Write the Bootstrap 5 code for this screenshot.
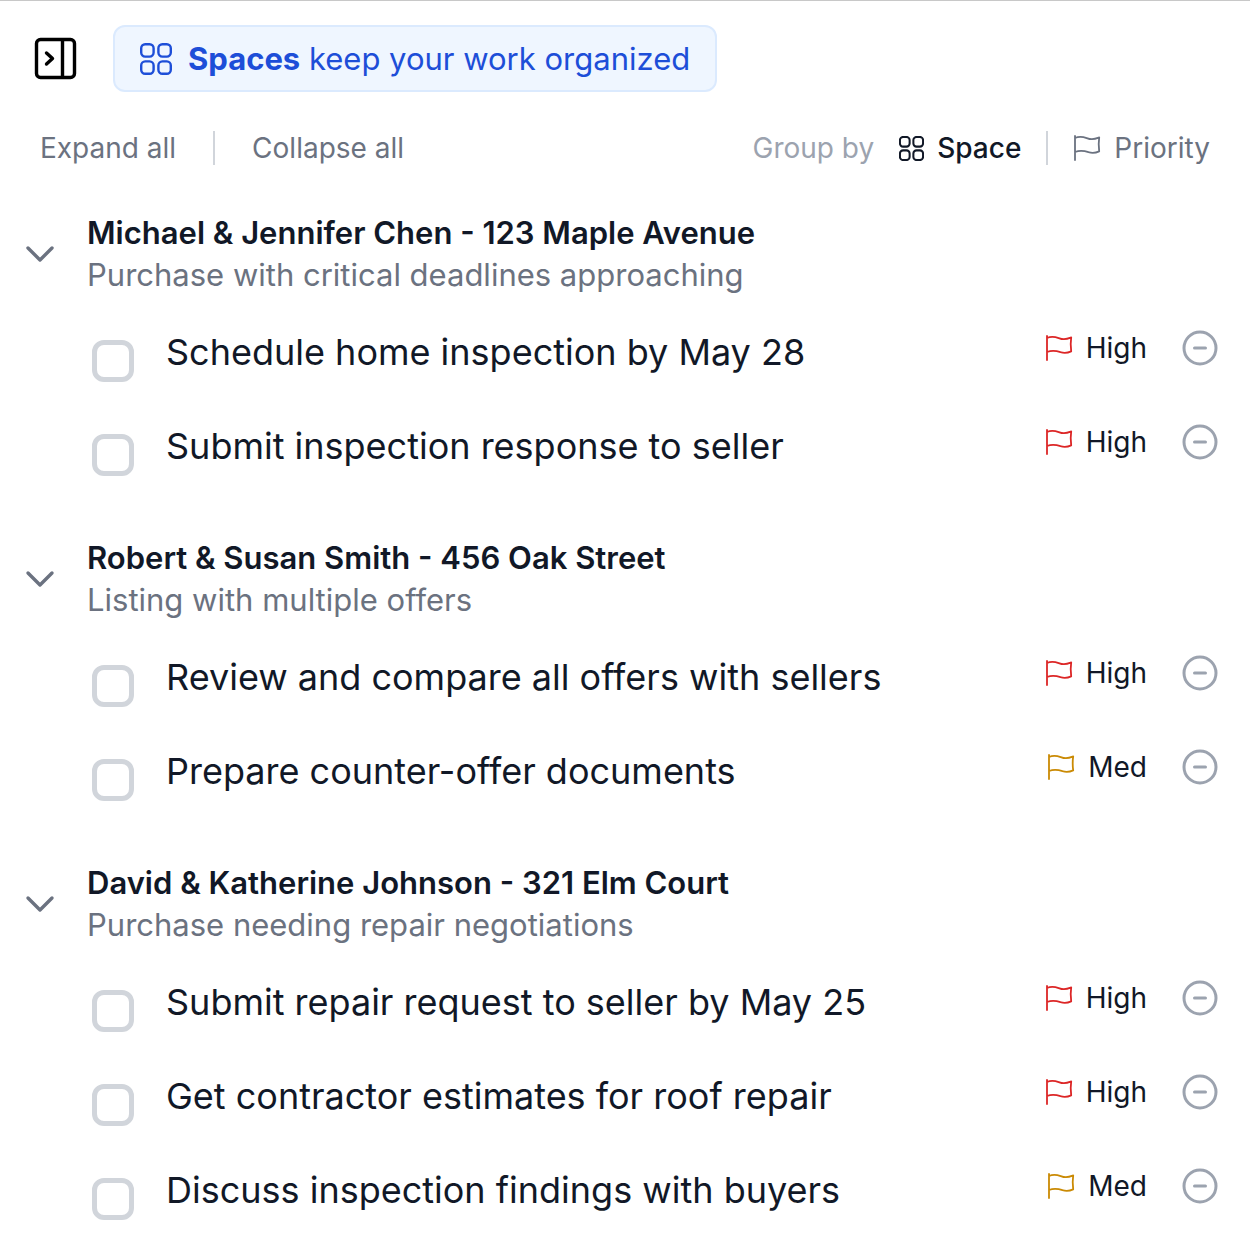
<!DOCTYPE html>
<html lang="en">
<head>
<meta charset="utf-8">
<meta name="viewport" content="width=device-width, initial-scale=1">
<title>Spaces</title>
<link rel="stylesheet" href="https://cdn.jsdelivr.net/npm/bootstrap@5.3.0/dist/css/bootstrap.min.css">
<style>
  body { font-family: Inter, "Liberation Sans", sans-serif; color: #111827; background: #fff; border-top: 1px solid #c8c8c8; }
  svg { display: block; flex: none; fill: none; stroke: currentColor; stroke-linecap: round; stroke-linejoin: round; }
  button { font-family: inherit; }
  .plain-btn { background: none; border: 0; padding: 0; color: inherit; }
  .top-bar { padding: 24px 34px 0; gap: 36px; }
  .spaces-banner { background: #eff6ff; border: 2px solid #dbeafe; border-radius: 12px; color: #1d4ed8; font-size: 31px; line-height: 47px; padding: 8px 25px; gap: 16px; }
  .tool-bar { padding: 36px 40px 0; font-size: 28px; line-height: 40px; color: #6b7280; }
  .tool-sep { width: 2px; height: 34px; background: #d1d5db; margin: 0 25px; }
  .sep-wide { margin: 0 37px; }
  .group-label { color: #9ca3af; margin-right: 25px; }
  .icon-gap { gap: 13px; }
  .text-faint { color: #9ca3af; }
  .text-muted-ink { color: #6b7280; }
  .text-ink { color: #111827; }
  .group-area { padding-top: 44px; }
  .space-group { padding: 0 32px 0 24px; margin-bottom: 43px; }
  .space-group:last-child, .space-group:last-child .task-list { margin-bottom: 0; }
  .group-head { gap: 31px; }
  .group-title { font-size: 31px; line-height: 42px; font-weight: 600; margin: 0; }
  .group-note { font-size: 31px; line-height: 42px; color: #6b7280; margin: 0; }
  .task-list { margin: 10px 0 0 68px; }
  .task-row { padding: 18px 0; }
  .task-box.form-check-input { width: 42px; height: 42px; margin: 16px 0 0; border: 5px solid #d1d5db; border-radius: 12px; flex: none; }
  .task-text { font-size: 36px; line-height: 56px; padding-left: 32px; }
  .task-side { font-size: 28px; line-height: 48px; gap: 35px; }
  .prio-high { color: #dc2626; }
  .prio-med { color: #ca8a04; }
</style>
</head>
<body>
<svg width="0" height="0" class="position-absolute" aria-hidden="true">
  <symbol id="grid" viewBox="0 0 32 32">
    <rect x="1.200" y="1.200" width="12.400" height="12.400" rx="4"/><rect x="18.400" y="1.200" width="12.400" height="12.400" rx="4"/>
    <rect x="1.200" y="18.400" width="12.400" height="12.400" rx="4"/><rect x="18.400" y="18.400" width="12.400" height="12.400" rx="4"/>
  </symbol>
  <symbol id="flag" viewBox="0 0 28 28">
    <path d="M2 26V2M2 4C10 .5 14 5.500 19 5.200C22 5 24 4.200 26.200 3.400C25.500 8 25.600 13 26.200 17.400C23 18.800 19.500 19.400 15.500 18.200C11 16.600 7 16 2 18"/>
  </symbol>
  <symbol id="chevron" viewBox="0 0 32 20"><path d="M4 4l12 12L28 4"/></symbol>
  <symbol id="minus" viewBox="0 0 36 36"><circle cx="18" cy="18" r="16"/><path d="M12.500 18h11"/></symbol>
</svg>

<header class="top-bar d-flex align-items-center">
  <button type="button" class="plain-btn text-black" aria-label="Toggle panel">
    <svg width="43" height="43" viewBox="0 0 43 43" stroke-width="3.400"><rect x="2.500" y="2.500" width="38" height="38" rx="4"/><path d="M28.500 3v37M12.500 16l6 5.500-6 5.500"/></svg>
  </button>
  <div class="spaces-banner d-flex align-items-center">
    <svg width="32" height="32" stroke-width="2.400"><use href="#grid"/></svg>
    <span><b>Spaces</b> keep your work organized</span>
  </div>
</header>

<nav class="tool-bar d-flex align-items-center justify-content-between" aria-label="List options">
  <div class="d-flex align-items-center">
    <button type="button" class="plain-btn">Expand all</button>
    <span class="tool-sep sep-wide"></span>
    <button type="button" class="plain-btn">Collapse all</button>
  </div>
  <div class="d-flex align-items-center">
    <span class="group-label">Group by</span>
    <button type="button" class="plain-btn text-ink fw-medium d-flex align-items-center icon-gap"><svg width="25" height="25" stroke-width="2.600"><use href="#grid"/></svg>Space</button>
    <span class="tool-sep"></span>
    <button type="button" class="plain-btn d-flex align-items-center icon-gap"><svg width="28" height="28" stroke-width="1.800"><use href="#flag"/></svg>Priority</button>
  </div>
</nav>

<main class="group-area" id="groups"></main>

<script src="https://cdn.jsdelivr.net/npm/bootstrap@5.3.0/dist/js/bootstrap.bundle.min.js"></script>
<script>
  const groups = [
    ["Michael & Jennifer Chen - 123 Maple Avenue", "Purchase with critical deadlines approaching",
      [["Schedule home inspection by May 28", "High"], ["Submit inspection response to seller", "High"]]],
    ["Robert & Susan Smith - 456 Oak Street", "Listing with multiple offers",
      [["Review and compare all offers with sellers", "High"], ["Prepare counter-offer documents", "Med"]]],
    ["David & Katherine Johnson - 321 Elm Court", "Purchase needing repair negotiations",
      [["Submit repair request to seller by May 25", "High"], ["Get contractor estimates for roof repair", "High"], ["Discuss inspection findings with buyers", "Med"]]]
  ];
  const esc = s => s.replace(/&/g, "&amp;");
  document.getElementById("groups").innerHTML = groups.map(([title, note, tasks], g) => `
    <section class="space-group">
      <div class="group-head d-flex align-items-center">
        <button type="button" class="plain-btn text-muted-ink" aria-label="Collapse group"><svg width="32" height="20" stroke-width="3.400"><use href="#chevron"/></svg></button>
        <div><h2 class="group-title">${esc(title)}</h2><p class="group-note">${note}</p></div>
      </div>
      <ul class="task-list list-unstyled">${tasks.map(([text, prio], t) => `
        <li class="task-row d-flex align-items-start">
          <input class="task-box form-check-input" type="checkbox" id="task-${g}-${t}">
          <label class="task-text flex-grow-1" for="task-${g}-${t}">${text}</label>
          <div class="task-side d-flex align-items-center">
            <span class="d-flex align-items-center icon-gap"><svg class="prio-${prio.toLowerCase()}" width="28" height="28" stroke-width="1.800"><use href="#flag"/></svg>${prio}</span>
            <button type="button" class="plain-btn text-faint" aria-label="Remove task"><svg width="36" height="36" stroke-width="3"><use href="#minus"/></svg></button>
          </div>
        </li>`).join("")}
      </ul>
    </section>`).join("");
</script>
</body>
</html>
